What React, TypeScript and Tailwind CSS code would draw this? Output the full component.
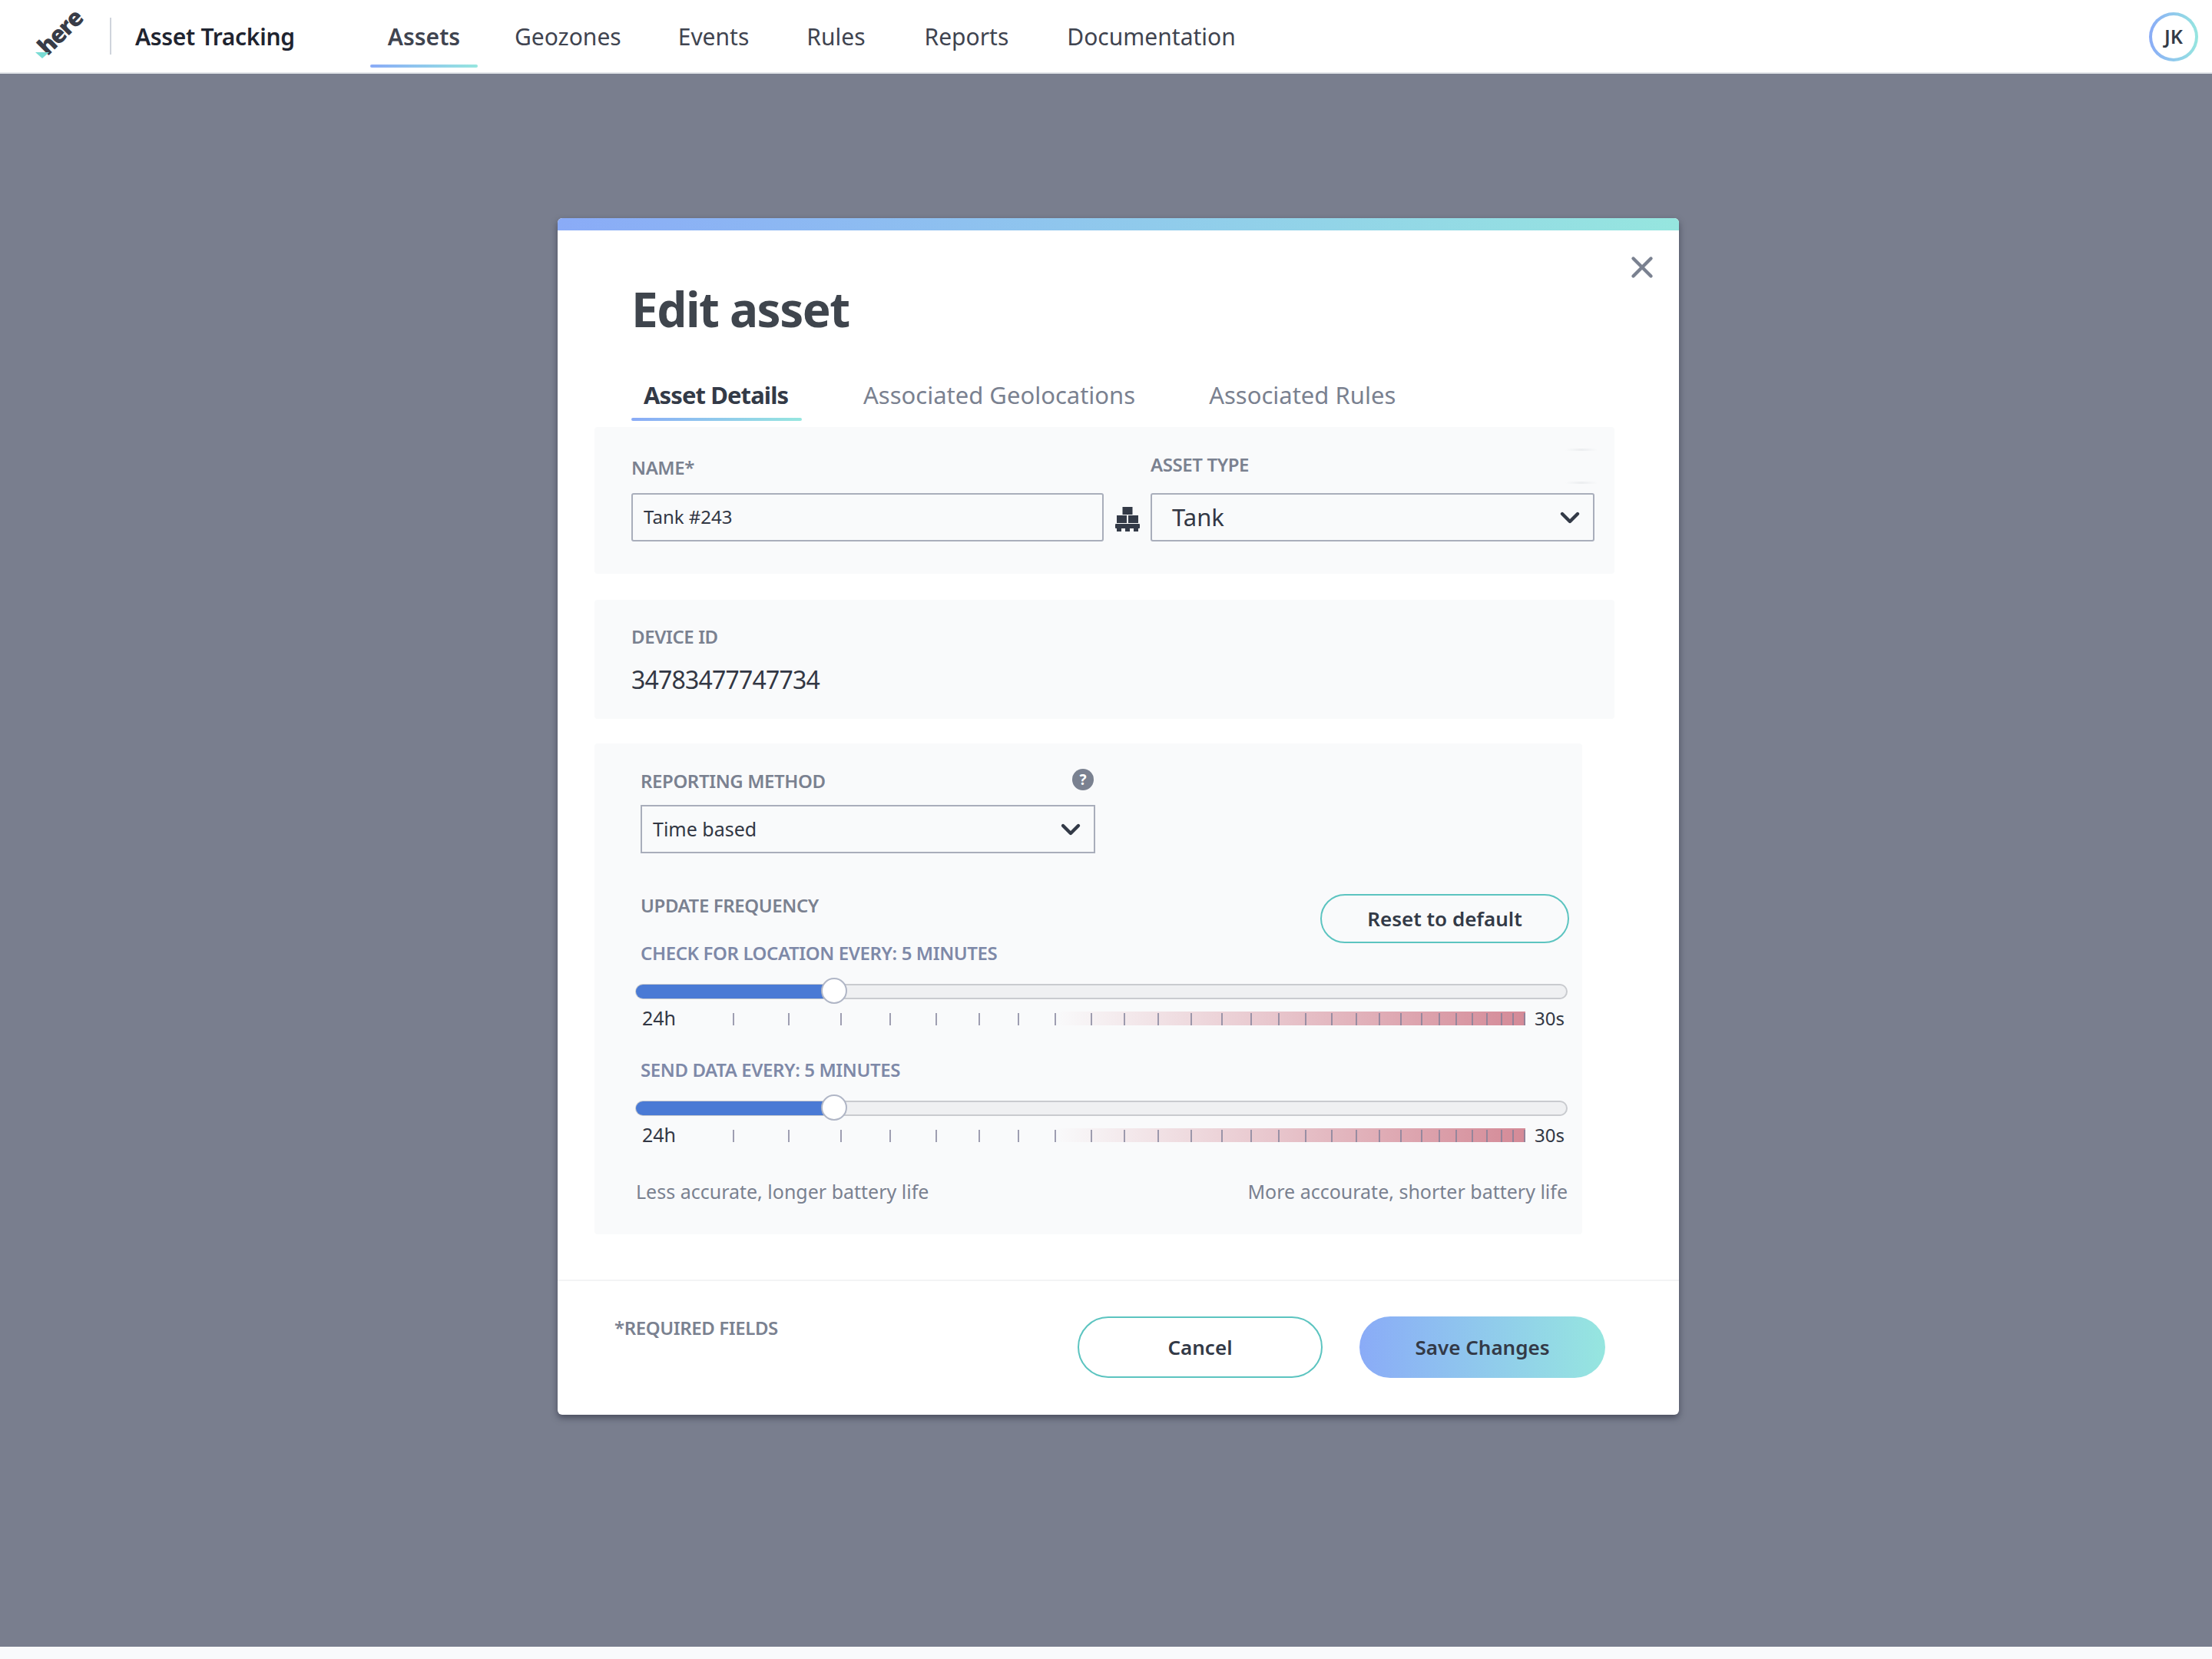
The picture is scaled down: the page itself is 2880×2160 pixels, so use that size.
import React from 'react';
import { ChevronDown, X } from 'lucide-react';

const font = { fontFamily: '"Noto Sans", sans-serif' };
const brand = 'bg-gradient-to-r from-[#8aabf7] to-[#96e6df]';
const label = 'text-[24px] leading-[30px] font-semibold tracking-[-0.4px] text-[#7a8190]';
const labelBlue = 'text-[24px] leading-[30px] font-semibold tracking-[-0.4px] text-[#7e89a8]';
const btnText = 'text-[26px] font-semibold text-[#333a47]';

const navItems = [
  { label: 'Assets', cls: 'ml-[98px] w-[140px] font-semibold text-[#1f2430]', active: true },
  { label: 'Geozones', cls: 'ml-[48px]' },
  { label: 'Events', cls: 'ml-[74px]' },
  { label: 'Rules', cls: 'ml-[75px]' },
  { label: 'Reports', cls: 'ml-[77px]' },
  { label: 'Documentation', cls: 'ml-[76px]' },
];

// x positions of the tick marks, measured from the left of the scale
const ticks = [5, 77, 145, 209, 269, 325, 376, 424, 471, 514, 558, 601, 641, 679, 715, 750, 784, 816, 846, 874, 901, 924, 946, 967, 986, 1005, 1020, 1035];

function Scale() {
  return (
    <div className="flex items-center pl-[2px] mt-[16px] h-[20px]">
      <span className="w-[114px] -mt-[3px] text-[25px] leading-none text-[#323744]">24h</span>
      <svg width="1040" height="20" viewBox="0 0 1040 20" className="shrink-0">
        <defs>
          <linearGradient id="heat" x1="0" x2="1" y1="0" y2="0">
            <stop offset="0" stopColor="#d48a97" stopOpacity="0" />
            <stop offset="1" stopColor="#d48a97" />
          </linearGradient>
        </defs>
        <rect x="424" y="0" width="612" height="18" fill="url(#heat)" />
        {ticks.map(t => (
          <line key={t} x1={t} x2={t} y1="2" y2="18" stroke="#7f7f98" strokeOpacity="0.75" strokeWidth="2" />
        ))}
      </svg>
      <span className="ml-[8px] -mt-[2px] text-[24px] leading-none text-[#323744]">30s</span>
    </div>
  );
}

function Slider() {
  return (
    <div className="relative mt-[25px] h-[20px] w-[1214px] ml-[-7px] rounded-full bg-[#eff0f2] border-2 border-[#c9cbcf]">
      <div className="h-[18px] w-[250px] -mt-[1px] -ml-[1px] rounded-l-full bg-[#4a7ad5]" />
      <div className="absolute left-[240px] top-[-10px] w-[34px] h-[34px] rounded-full bg-white border-2 border-[#b0b6c6]" />
    </div>
  );
}

function PalletIcon() {
  return (
    <svg width="32" height="32" viewBox="0 0 32 32" className="shrink-0" fill="#333a47">
      <rect x="9.5" y="0" width="13" height="10" />
      <rect x="2" y="11" width="13" height="10" />
      <rect x="17" y="11" width="13" height="10" />
      <rect x="0" y="22" width="32" height="6" rx="1" />
      <rect x="2" y="27" width="6" height="5" />
      <rect x="13" y="27" width="6" height="5" />
      <rect x="24" y="27" width="6" height="5" />
    </svg>
  );
}

export default function App() {
  return (
    <div className="h-[2160px] w-[2880px] overflow-hidden bg-[#f9fafc]" style={font}>
      {/* Top bar */}
      <header className="h-[96px] bg-white border-b-2 border-[#e3e6ea] flex items-center relative">
        <div className="relative w-[143px] h-full shrink-0">
          <span className="absolute left-[44px] top-[26px] text-[31px] leading-[31px] font-extrabold tracking-[-1.5px] text-[#383c47] -rotate-45" style={{ fontFamily: '"Open Sans", sans-serif' }}>here</span>
          <div className="absolute left-[46px] top-[68px] w-0 h-0 border-l-[9px] border-r-[9px] border-t-[8px] border-l-transparent border-r-transparent border-t-[#7adcd4]" />
        </div>
        <div className="w-[2px] h-[48px] bg-[#cfd4dc] -mt-[1px]" />
        <div className="ml-[31px] text-[30px] font-semibold tracking-[-0.3px] text-[#1f2430] whitespace-nowrap w-[208px]">Asset Tracking</div>
        <nav className="flex items-center h-full">
          {navItems.map(n => (
            <div key={n.label} className={`relative h-full flex items-center justify-center text-[30px] whitespace-nowrap text-[#3f4450] ${n.cls}`}>
              {n.label}
              {n.active && <div className={`absolute left-0 right-0 top-[84px] h-[4px] rounded-full ${brand}`} />}
            </div>
          ))}
        </nav>
        <div className={`absolute left-[2798px] top-[16px] w-[64px] h-[64px] rounded-full p-[4px] ${brand}`}>
          <div className="w-full h-full rounded-full bg-white flex items-center justify-center text-[25px] font-semibold text-[#333a47]">JK</div>
        </div>
      </header>

      <main className="h-[2048px] bg-[#797e8e] pt-[188px] pl-[726px]">
        {/* Modal */}
        <div className="relative w-[1460px] h-[1558px] bg-white rounded-[6px] overflow-hidden shadow-[0_4px_8px_rgba(40,44,60,0.6)]">
          <div className={`h-[16px] ${brand}`} />
          <div className="absolute right-[25px] top-[41px] text-[#7a8190]">
            <X size={46} strokeWidth={2.3} />
          </div>

          <h1 className="ml-[96px] mt-[64px] text-[62px] leading-[76px] font-bold tracking-[-1.5px] text-[#3f454d]">Edit asset</h1>

          {/* Tabs */}
          <div className="ml-[96px] mt-[51px] flex text-[31px] h-[56px] text-[#7a8190] whitespace-nowrap">
            <div className="relative w-[222px] pl-[16px] font-bold tracking-[-0.9px] text-[#333a47]">
              Asset Details
              <div className={`absolute left-0 right-0 top-[53px] h-[4px] rounded-full ${brand}`} />
            </div>
            <div className="ml-[80px]">Associated Geolocations</div>
            <div className="ml-[96px]">Associated Rules</div>
          </div>

          {/* Name + type */}
          <section className="relative ml-[48px] mt-[9px] w-[1328px] h-[191px] bg-[#f9fafb] rounded-[4px] pl-[48px] flex">
            <div className="w-[615px]">
              <div className={`mt-[38px] ${label}`}>NAME*</div>
              <div className="mt-[18px] h-[63px] border-2 border-[#a9aebb] rounded-[3px] pl-[14px] pb-[2px] flex items-center text-[24px] text-[#323744]">Tank #243</div>
            </div>
            <div className="ml-[15px] mt-[104px]"><PalletIcon /></div>
            <div className="ml-[14px] w-[578px]">
              <div className={`mt-[34px] ${label}`}>ASSET TYPE</div>
              <div className="mt-[22px] h-[63px] border-2 border-[#a9aebb] rounded-[3px] pl-[26px] pr-[10px] flex items-center justify-between text-[31px] text-[#323744]">
                Tank
                <ChevronDown size={40} strokeWidth={2.6} className="text-[#333a47]" />
              </div>
            </div>
            <div className="absolute left-[1264px] top-[28px] w-[42px] h-[3px] bg-gradient-to-r from-transparent via-[#eceef0] to-transparent" />
            <div className="absolute left-[1264px] top-[71px] w-[42px] h-[3px] bg-gradient-to-r from-transparent via-[#eceef0] to-transparent" />
          </section>

          {/* Device id */}
          <section className="ml-[48px] mt-[34px] w-[1328px] h-[155px] bg-[#f9fafb] rounded-[4px] pl-[48px] pt-[33px]">
            <div className={label}>DEVICE ID</div>
            <div className="mt-[21px] text-[32px] leading-[40px] tracking-[-0.8px] text-[#323744]">34783477747734</div>
          </section>

          {/* Reporting */}
          <section className="relative ml-[48px] mt-[32px] w-[1286px] h-[639px] bg-[#f9fafb] rounded-[4px] pl-[60px] pt-[34px]">
            <div className="flex justify-between w-[592px]">
              <div className={label}>REPORTING METHOD</div>
              <div className="w-[28px] h-[28px] mr-[2px] -mt-[1px] rounded-full bg-[#7a8190] flex items-center justify-center text-white text-[19px] font-bold leading-none">?</div>
            </div>
            <div className="mt-[16px] w-[592px] h-[63px] border-2 border-[#a9aebb] pl-[14px] pr-[10px] flex items-center justify-between text-[25px] text-[#323744]">
              Time based
              <ChevronDown size={40} strokeWidth={2.6} className="text-[#333a47]" />
            </div>

            <div className={`mt-[53px] ${label}`}>UPDATE FREQUENCY</div>
            <button className={`absolute left-[945px] top-[196px] w-[324px] h-[64px] rounded-full border-2 border-[#5cc4c0] ${btnText}`}>Reset to default</button>

            <div className={`mt-[32px] ${labelBlue}`}>CHECK FOR LOCATION EVERY: 5 MINUTES</div>
            <Slider />
            <Scale />

            <div className={`mt-[41px] ${labelBlue}`}>SEND DATA EVERY: 5 MINUTES</div>
            <Slider />
            <Scale />

            <div className="mt-[47px] ml-[-6px] w-[1213px] flex justify-between text-[25px] leading-[30px] text-[#7a8190]">
              <span>Less accurate, longer battery life</span>
              <span>More accourate, shorter battery life</span>
            </div>
          </section>

          {/* Footer */}
          <div className="mt-[59px] h-[2px] bg-[#f3f4f5]" />
          <div className="relative pl-[74px] pt-[46px] flex">
            <div className={label}>*REQUIRED FIELDS</div>
            <button className={`absolute left-[677px] top-[46px] w-[319px] h-[80px] rounded-full border-2 border-[#5cc4c0] ${btnText}`}>Cancel</button>
            <button className={`absolute left-[1044px] top-[46px] w-[320px] h-[80px] rounded-full ${btnText} ${brand}`}>Save Changes</button>
          </div>
        </div>
      </main>
    </div>
  );
}
